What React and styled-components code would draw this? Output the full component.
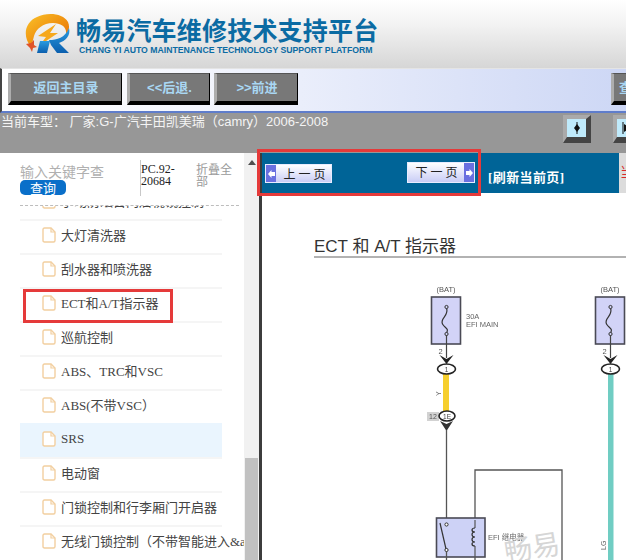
import React from "react";
import styled, { createGlobalStyle } from "styled-components";

const GlobalStyle = createGlobalStyle`
  html, body {
    margin: 0;
    padding: 0;
    background: #fff;
    overflow: hidden;
  }
  * {
    box-sizing: border-box;
  }
`;

const Page = styled.div`
  width: 626px;
  height: 560px;
  overflow: hidden;
  display: flex;
  flex-direction: column;
  font-family: "Liberation Serif", "Noto Sans CJK SC", serif;
`;

const Header = styled.header`
  height: 68px;
  flex: none;
  display: flex;
  align-items: flex-start;
  gap: 5px;
  padding: 14px 0 0 25px;
  background: linear-gradient(#ffffff 0%, #f3f3f3 35%, #d6d6d6 100%);
`;

const BrandText = styled.div`
  display: flex;
  flex-direction: column;
`;

const BrandTitle = styled.h1`
  margin: 0;
  font: bold 25px/30px "Noto Sans CJK SC", sans-serif;
  letter-spacing: 0.2px;
  color: #0b6ba3;
  white-space: nowrap;
`;

const BrandSub = styled.div`
  margin: 1px 0 0 3px;
  font: bold 8.7px/11px "Liberation Sans", sans-serif;
  color: #0b6ba3;
  white-space: nowrap;
`;

const Toolbar = styled.nav`
  height: 45px;
  flex: none;
  display: flex;
  align-items: flex-start;
  padding: 4px 0 0 6px;
  overflow: hidden;
  background: linear-gradient(90deg, #ffffff 0%, #f4f6fd 30%, #cdd7f5 100%);
  border-top: 1px solid #e4e4e4;
  border-left: 2px solid #444;
  border-bottom: 2px solid #5f7dcb;
`;

const NavButton = styled.button`
  flex: none;
  width: ${(p) => p.$w}px;
  height: 32px;
  margin-left: ${(p) => p.$gap || 0}px;
  padding: 0;
  background: #787878;
  border-style: solid;
  border-width: 1px 1px 4px 3px;
  border-color: #555 #000 #000 #adadad;
  color: #a9d7f3;
  font: bold 13px/24px "Liberation Sans", "Noto Sans CJK SC", sans-serif;
  white-space: nowrap;
`;

const InfoBar = styled.div`
  height: 40px;
  flex: none;
  display: flex;
  align-items: flex-start;
  padding-top: 2px;
  background: #979797;
  overflow: hidden;
`;

const CarLabel = styled.div`
  width: 563px;
  flex: none;
  padding-left: 1px;
  font: 13px/14px "Liberation Sans", "Noto Sans CJK SC", sans-serif;
  color: #f4f4f4;
  white-space: nowrap;
`;

const SplitButton = styled.button`
  flex: none;
  width: 28px;
  height: 28px;
  margin-right: 22px;
  padding: 0;
  display: flex;
  align-items: center;
  justify-content: center;
  background: #bfeafb;
  border-style: solid;
  border-width: 4px 5px 6px 4px;
  border-color: #aaa #444 #444 #aaa;
`;

const Body = styled.div`
  flex: 1;
  min-height: 0;
  display: flex;
  position: relative;
`;

const Sidebar = styled.aside`
  width: 244px;
  flex: none;
  display: flex;
  flex-direction: column;
  overflow: hidden;
`;

const SearchArea = styled.div`
  height: 53px;
  flex: none;
  margin-right: 5px;
  margin-left: 20px;
  display: flex;
  border-bottom: 1px dashed #bdbdbd;
`;

const SearchBox = styled.div`
  width: 120px;
  flex: none;
  padding-top: 10px;
`;

const Placeholder = styled.div`
  width: 84px;
  height: 17px;
  overflow: hidden;
  white-space: nowrap;
  font: 14px/16px "Noto Sans CJK SC", sans-serif;
  color: #b0b0b0;
`;

const QueryButton = styled.button`
  display: block;
  width: 46px;
  height: 15px;
  padding: 0;
  border: 0;
  border-radius: 5px;
  background: #0a6fc9;
  color: #fff;
  font: 13px/15px "Noto Sans CJK SC", sans-serif;
`;

const CodeCell = styled.div`
  width: 55px;
  height: 36px;
  flex: none;
  margin-top: 7px;
  padding: 3px 0 0 0;
  border-left: 1px solid #c8c8c8;
  font: 12px/12px "Liberation Serif", serif;
  color: #222;
`;

const FoldCell = styled.div`
  width: 37px;
  flex: none;
  padding: 10px 0 0 1px;
  font: 12px/12px "Noto Sans CJK SC", sans-serif;
  color: #9a9a9a;
`;

const TreeClip = styled.div`
  flex: 1;
  min-height: 0;
  overflow: hidden;
`;

const TreeList = styled.ul`
  list-style: none;
  margin: -21px 0 0 20px;
  padding: 0;
  width: 202px;
`;

const TreeRow = styled.li`
  height: 34px;
  display: flex;
  align-items: center;
  gap: 5px;
  padding: 0 0 5px 22px;
  border-top: 2px solid ${(p) => (p.$active ? "#eaf5fe" : "#f5f5f5")};
  background: ${(p) => (p.$active ? "#eaf5fe" : "transparent")};
  font-size: 13px;
  color: #444;
  white-space: nowrap;

  svg {
    flex: none;
  }
`;

const Scrollbar = styled.div`
  width: 15px;
  flex: none;
  display: flex;
  flex-direction: column;
  align-items: center;
  background: #f1f1f1;
`;

const ScrollArrow = styled.div`
  margin-top: 7px;
  width: 0;
  height: 0;
  border-left: 4px solid transparent;
  border-right: 4px solid transparent;
  border-bottom: 5px solid #505050;
`;

const ScrollThumb = styled.div`
  margin-top: auto;
  width: 13px;
  height: 102px;
  background: #c1c1c1;
`;

const Divider = styled.div`
  width: 3px;
  flex: none;
  background: #3c3c3c;
`;

const Content = styled.main`
  flex: 1;
  min-width: 0;
  display: flex;
  flex-direction: column;
`;

const PagerRow = styled.div`
  height: 40px;
  flex: none;
  display: flex;
`;

const PagerBar = styled.div`
  width: 357px;
  flex: none;
  display: flex;
  align-items: flex-start;
  background: #006497;
`;

const PagerSide = styled.div`
  flex: 1;
  padding: 9px 0 0 1px;
  background: #dcdcdc;
  overflow: hidden;
  font: 14px/18px "Noto Sans CJK SC", sans-serif;
  color: #d92a2a;
`;

const PageButton = styled.button`
  flex: none;
  width: ${(p) => p.$w}px;
  height: ${(p) => p.$h}px;
  margin: ${(p) => p.$top}px 0 0 ${(p) => p.$left}px;
  padding: 0;
  display: flex;
  align-items: stretch;
  flex-direction: ${(p) => (p.$next ? "row-reverse" : "row")};
  background: linear-gradient(#ffffff, #c9cdf6);
  border: 1px solid #e8ecff;
  color: #222;
  font: 12px/17px "Noto Sans CJK SC", sans-serif;
  letter-spacing: 3px;
`;

const PageArrow = styled.span`
  width: 10px;
  flex: none;
  display: flex;
  align-items: center;
  justify-content: center;
  background: #6a70e0;
`;

const PageLabel = styled.span`
  flex: 1;
  text-align: center;
  padding-left: ${(p) => p.$inset || 0}px;
`;

const RefreshLink = styled.a`
  margin: 16px 0 0 13px;
  font: bold 13px/18px "Liberation Serif", "Noto Sans CJK SC", serif;
  letter-spacing: 0.4px;
  color: #fff;
  white-space: nowrap;
`;

const DocView = styled.div`
  flex: 1;
  min-height: 0;
  overflow: hidden;
  background: #fff;
`;

const Diagram = styled.svg`
  display: block;
  width: 364px;
  height: 367px;
`;

const Callout = styled.div`
  position: absolute;
  left: ${(p) => p.$x}px;
  top: ${(p) => p.$y}px;
  width: ${(p) => p.$w}px;
  height: ${(p) => p.$h}px;
  border: 3px solid #e53a3a;
  pointer-events: none;
`;

const items = [
  "手动防眩目内后视镜控制",
  "大灯清洗器",
  "刮水器和喷洗器",
  "ECT和A/T指示器",
  "巡航控制",
  "ABS、TRC和VSC",
  "ABS(不带VSC）",
  "SRS",
  "电动窗",
  "门锁控制和行李厢门开启器",
  "无线门锁控制（不带智能进入&amp;启动系统）",
];

const Logo = () => (
  <svg width="46" height="41" viewBox="0 0 46 41">
    <defs>
      <linearGradient id="ring" x1="0" y1="0" x2="1" y2="1">
        <stop offset="0" stopColor="#f9c22a" />
        <stop offset="0.55" stopColor="#f0900f" />
        <stop offset="1" stopColor="#e2660f" />
      </linearGradient>
      <linearGradient id="leg" x1="0" y1="0" x2="0" y2="1">
        <stop offset="0" stopColor="#2a9be0" />
        <stop offset="1" stopColor="#0b5fae" />
      </linearGradient>
    </defs>
    <path
      d="M6 33C-3 22 0 8 12 3C22 -2 38 -1 43 8C45 13 44 17 41 20C42 13 36 9 28 9C18 9 11 15 9 22C8 26 7 30 6 33Z"
      fill="url(#ring)"
    />
    <path d="M13 22L31 10L25 19L33 19L15 31L21 23Z" fill="#f6a81c" />
    <path d="M1 30L6 29L9 26L9 31L12 33L8 34L7 38L5 34Z" fill="#e0552a" />
    <path d="M15 27L25 27L22 39L12 39Z" fill="url(#leg)" />
    <path
      d="M24 26C32 26 40 24 44 14C46 22 40 27 34 29L44 39L32 39L26 31Z"
      fill="url(#leg)"
    />
  </svg>
);

const PrevGlyph = () => (
  <svg width="7" height="8" viewBox="0 0 7 8">
    <path d="M0 4L3.5 0V2H7V6H3.5V8Z" fill="#fff" />
  </svg>
);

const NextGlyph = () => (
  <svg width="7" height="8" viewBox="0 0 7 8">
    <path d="M7 4L3.5 0V2H0V6H3.5V8Z" fill="#fff" />
  </svg>
);

const DiamondGlyph = () => (
  <svg width="10" height="14" viewBox="0 0 10 14">
    <path d="M5 3L8 7L5 11L2 7Z" fill="#111" />
    <path d="M5 1V13" stroke="#111" strokeWidth="1" />
  </svg>
);

const ForwardGlyph = () => (
  <svg width="10" height="14" viewBox="0 0 10 14">
    <path d="M1 1V13" stroke="#111" strokeWidth="1" />
    <path d="M2 3L8 7L2 11Z" fill="#111" />
  </svg>
);

const FileIcon = () => (
  <svg width="14" height="16" viewBox="0 0 14 16">
    <path
      d="M1 2.5Q1 1 2.5 1H9L13 5V13.5Q13 15 11.5 15H2.5Q1 15 1 13.5Z"
      fill="#fff"
      stroke="#f2cfa0"
      strokeWidth="1.4"
    />
    <path d="M9 1V5H13" fill="none" stroke="#f2cfa0" strokeWidth="1.2" />
  </svg>
);

const FuseBox = ({ x }) => (
  <g>
    <text x={x + 14.5} y="292" fontSize="7.5" textAnchor="middle" fill="#555">(BAT)</text>
    <rect x={x} y="297" width="29" height="47" fill="#d2d3f7" stroke="#4a4a55" strokeWidth="1.6" />
    <path
      d={`M${x + 15} 308C${x + 18} 316 ${x + 8} 318 ${x + 11} 324C${x + 13} 328 ${x + 18} 328 ${x + 15} 333`}
      fill="none"
      stroke="#333"
      strokeWidth="1.2"
    />
    <circle cx={x + 15} cy="307" r="1.6" fill="#d2d3f7" stroke="#333" />
    <circle cx={x + 15} cy="334" r="1.6" fill="#d2d3f7" stroke="#333" />
    <path d={`M${x + 15} 335V358`} stroke="#444" strokeWidth="1.2" />
    <text x={x + 9} y="354" fontSize="7.5" textAnchor="middle" fill="#555">2</text>
    <path d={`M${x + 8} 355L${x + 15} 359L${x + 22} 355L${x + 15} 364Z`} fill="#222" />
  </g>
);

const Pin = ({ x, y, label, rx = 9 }) => (
  <g>
    <ellipse cx={x} cy={y} rx={rx} ry="5" fill="#fff" stroke="#222" strokeWidth="1.6" />
    <text x={x} y={y + 2.5} fontSize="6.5" textAnchor="middle" fill="#444">{label}</text>
  </g>
);

const WiringDiagram = () => (
  <Diagram viewBox="262 193 364 367" fontFamily='"Liberation Sans", "Noto Sans CJK SC", sans-serif'>
    <text x="314" y="252" fontSize="17" fill="#333">ECT 和 A/T 指示器</text>
    <path d="M314 257H626" stroke="#666" strokeWidth="1.2" />

    <g style={{ filter: "blur(0.35px)" }}>
      <FuseBox x={431.5} />
      <text x="466" y="319" fontSize="7.5" fill="#666">30A</text>
      <text x="466" y="327" fontSize="7.5" fill="#666">EFI MAIN</text>
      <rect x="443" y="374" width="6" height="38" fill="#f6cf2e" />
      <Pin x={446.5} y={369} label="1" />
      <text x="0" y="0" fontSize="7" fill="#666" transform="translate(441 396) rotate(-90)">Y</text>
      <rect x="427" y="412" width="12" height="9" fill="#d2d2d2" />
      <text x="433" y="419" fontSize="7" textAnchor="middle" fill="#555">12</text>
      <Pin x={447} y={416} label="1E" rx={8} />
      <path d="M440 421L446.5 424L453 421L446.5 431Z" fill="#333" />
      <path d="M446.5 430V518" stroke="#555" strokeWidth="1.3" />

      <path d="M475 520V470H562V560" fill="none" stroke="#555" strokeWidth="1.3" />
      <rect x="436.5" y="518" width="48.5" height="39" fill="#cdd2f6" stroke="#4a4a55" strokeWidth="1.6" />
      <circle cx="446.5" cy="524.5" r="1.6" fill="#fff" stroke="#333" />
      <circle cx="446.5" cy="550" r="1.6" fill="#fff" stroke="#333" />
      <path d="M440 523L446 549" stroke="#333" strokeWidth="1.2" />
      <path d="M446.5 551V560M475 557V560" stroke="#555" strokeWidth="1.3" />
      <path d="M475 520V528M475 546V557" stroke="#555" strokeWidth="1.2" />
      <path
        d="M475 528C471 528 471 532 475 532C471 532 471 537 475 537C471 537 471 542 475 542C471 542 471 546 475 546"
        fill="none"
        stroke="#333"
        strokeWidth="1.2"
      />
      <text x="488" y="540" fontSize="7.5" fill="#666">EFI 继电器</text>

      <FuseBox x={595.5} />
      <rect x="608" y="374" width="5.5" height="186" fill="#70cdc3" />
      <Pin x={610.5} y={369} label="1" />
      <text x="0" y="0" fontSize="7" fill="#666" transform="translate(606 550) rotate(-90)">LG</text>
    </g>

    <text
      x="0"
      y="0"
      fontSize="28"
      fill="#d6d6d6"
      transform="translate(506 562) rotate(-9)"
    >
      畅易
    </text>
  </Diagram>
);

export default function App() {
  return (
    <Page>
      <GlobalStyle />
      <Header>
        <Logo />
        <BrandText>
          <BrandTitle>畅易汽车维修技术支持平台</BrandTitle>
          <BrandSub>CHANG YI AUTO MAINTENANCE TECHNOLOGY SUPPORT PLATFORM</BrandSub>
        </BrandText>
      </Header>

      <Toolbar>
        <NavButton $w={114}>返回主目录</NavButton>
        <NavButton $w={83} $gap={5}>&lt;&lt;后退.</NavButton>
        <NavButton $w={84} $gap={4}>&gt;&gt;前进</NavButton>
        <NavButton $w={40} $gap={313}>查询</NavButton>
      </Toolbar>

      <InfoBar>
        <CarLabel>当前车型： 厂家:G-广汽丰田凯美瑞（camry）2006-2008</CarLabel>
        <SplitButton><DiamondGlyph /></SplitButton>
        <SplitButton><ForwardGlyph /></SplitButton>
      </InfoBar>

      <Body>
        <Sidebar>
          <SearchArea>
            <SearchBox>
              <Placeholder>输入关键字查询</Placeholder>
              <QueryButton>查询</QueryButton>
            </SearchBox>
            <CodeCell>PC.92-<br />20684</CodeCell>
            <FoldCell>折叠全部</FoldCell>
          </SearchArea>
          <TreeClip>
            <TreeList>
              {items.map((item) => (
                <TreeRow key={item} $active={item === "SRS"}>
                  <FileIcon />
                  {item}
                </TreeRow>
              ))}
            </TreeList>
          </TreeClip>
        </Sidebar>
        <Scrollbar>
          <ScrollArrow />
          <ScrollThumb />
        </Scrollbar>
        <Divider />
        <Content>
          <PagerRow>
            <PagerBar>
              <PageButton $w={67} $h={19} $top={11} $left={3}>
                <PageArrow><PrevGlyph /></PageArrow>
                <PageLabel $inset={5}>上一页</PageLabel>
              </PageButton>
              <PageButton $next $w={68} $h={21} $top={9} $left={75}>
                <PageArrow><NextGlyph /></PageArrow>
                <PageLabel $inset={4}>下一页</PageLabel>
              </PageButton>
              <RefreshLink>[刷新当前页]</RefreshLink>
            </PagerBar>
            <PagerSide>当</PagerSide>
          </PagerRow>
          <DocView>
            <WiringDiagram />
          </DocView>
        </Content>
        <Callout $x={257} $y={-4} $w={224} $h={47} />
        <Callout $x={23} $y={136} $w={150} $h={34} />
      </Body>
    </Page>
  );
}
